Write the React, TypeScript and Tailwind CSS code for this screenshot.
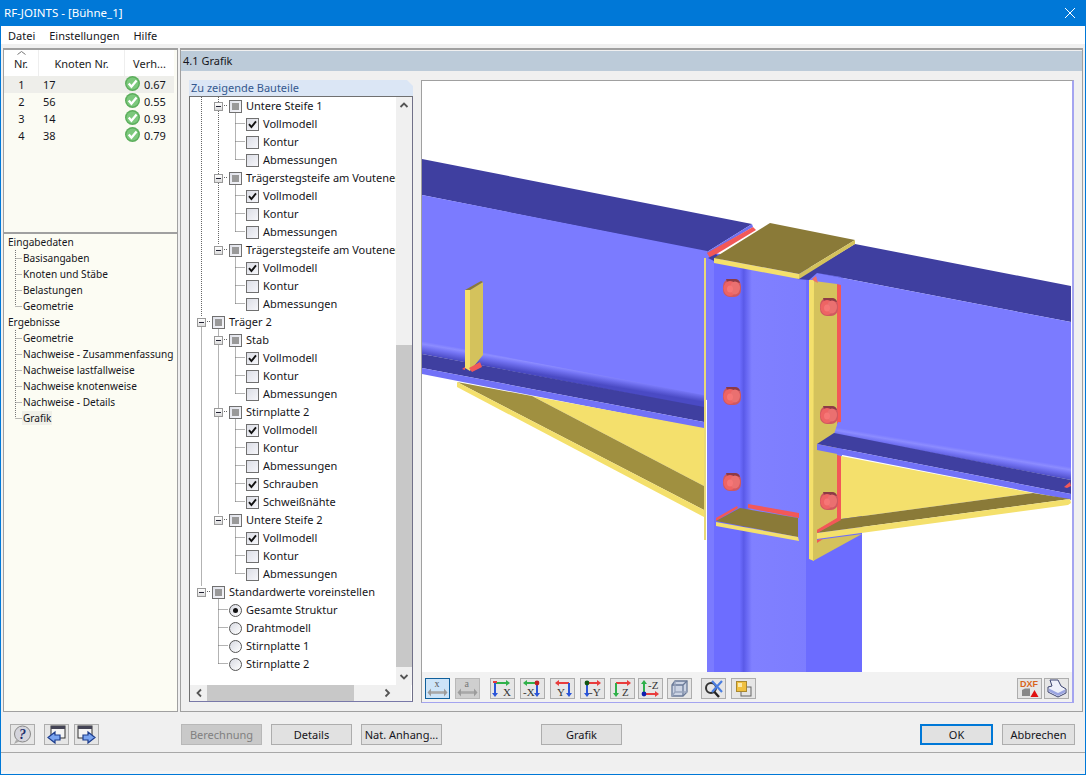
import React from "react";

const FONT = "[font-family:'Noto_Sans',sans-serif]";

function Poly({ p, f }: { p: string; f: string }) {
  return <polygon points={p} fill={f} />;
}

function Bolt({ x, y }: { x: number; y: number }) {
  return (
    <g>
      <rect x={x - 9} y={y - 9} width={18} height={18} rx={7} fill="#cf5860" />
      <path d={`M${x - 6} ${y - 9} h9 q4 0 5 4 l-4 -1 h-9 z`} fill="#8c3a46" />
      <ellipse cx={x - 2} cy={y + 0.5} rx={6.5} ry={7.5} fill="#ee6464" />
      <ellipse cx={x + 3} cy={y} rx={5} ry={6.5} fill="#ea7070" />
      <ellipse cx={x - 2} cy={y + 1} rx={3} ry={3.5} fill="#f67676" />
    </g>
  );
}

function Scene() {
  const web = "#7b7bff";
  const dark = "#3f3fa0";
  const flange = "#7272f8";
  const y1 = "#f4e06c";
  const y2 = "#d4c25c";
  const ol = "#8a7a38";
  const ol2 = "#a09040";
  const red = "#f25858";
  const stops = (
    <>
      <stop offset="0" stopColor="#7b7bff" />
      <stop offset="0.22" stopColor="#8c8cff" />
      <stop offset="0.45" stopColor="#7676f6" />
      <stop offset="1" stopColor="#4a4ac4" />
    </>
  );
  return (
    <svg viewBox="422 81 649 591" className="block h-[591px] w-[649px]" shapeRendering="geometricPrecision">
      <defs>
        <linearGradient id="col" gradientUnits="userSpaceOnUse" x1="707" y1="0" x2="809" y2="0">
          <stop offset="0" stopColor="#7b7bff" />
          <stop offset="0.07" stopColor="#7b7bff" />
          <stop offset="0.07" stopColor="#6d6dff" />
          <stop offset="0.32" stopColor="#6d6dff" />
          <stop offset="0.36" stopColor="#5a5ae8" />
          <stop offset="0.39" stopColor="#6868f4" />
          <stop offset="0.44" stopColor="#8080ff" />
          <stop offset="1" stopColor="#7d7dff" />
        </linearGradient>
        <linearGradient id="fl" gradientUnits="userSpaceOnUse" x1="422" y1="341" x2="419.8" y2="354">
          {stops}
        </linearGradient>
        <linearGradient id="fr" gradientUnits="userSpaceOnUse" x1="1071" y1="467" x2="1068.8" y2="480">
          {stops}
        </linearGradient>
      </defs>

      {/* left beam */}
      <Poly p="422,159 752,224 707,252 422,195" f={dark} />
      <Poly p="422,195 707,251 707,400 422,345" f={web} />
      <Poly p="422,341 704,395 704,408 422,354" f="url(#fl)" />
      <Poly p="422,354 704,407 704,422 422,368" f={dark} />
      <Poly p="422,368 704,422 704,429 422,374" f={flange} />

      {/* left haunch */}
      <Poly p="532,396 704,428 704,486" f={y1} />
      <Poly p="457,382 532,396 704,486 704,510" f={ol2} />
      <Poly p="457,382 704,510 704,517 457,387" f={y1} />
      <rect x="704" y="258" width="2" height="282" fill="#e8d878" />

      {/* left stiffener */}
      <Poly p="465,290 470,290 470,371 465,368" f={y1} />
      <Poly p="470,290 483,282 483,355 470,371" f={y2} />
      <Poly p="465,290 481,281 483,282 470,290" f={ol} />
      <Poly p="469,368 480,362 482,367 472,372" f={red} />
      <Poly p="462,369 465,367 465,370" f={red} />

      {/* column */}
      <Poly p="707,252 842,272 842,672 707,672" f="url(#col)" />
      <Poly p="806,533 862,533 862,672 806,672" f="#6c6cff" />
      <Poly p="820,500 862,500 862,540 820,540" f="#6c6cff" />
      <Poly p="806,270 809,270 809,540 806,540" f="#6c6cff" />

      {/* top plate region */}
      <Poly p="707,252 752,224 753,227 707,254" f="#7070f0" />
      <Poly p="707,253 753,227 756,230 710,258" f={red} />
      <Poly p="708,258 716,254 722,260 716,262" f={dark} />

      {/* right end plate */}
      <Poly p="809,280 814,280 814,561 809,559" f={y1} />
      <Poly p="814,281 837,284 837,520 817,533 817,540 862,534 813,561" f={y2} />

      {/* right beam */}
      <Poly p="855,244 1071,286 1071,322 817,273 809,280 797,279" f={dark} />
      <Poly p="817,273 1071,322 1071,472 838,428 841,277" f={web} />
      <Poly p="837,284 841,285 841,422 837,424" f={red} />
      <Poly p="812,279 816,276 818,283 814,281" f="#f07068" />
      <Poly p="1071,467 1071,480 834,434 838,422" f="url(#fr)" />
      <Poly p="834,433 1071,480 1071,494 817,444" f={dark} />
      <Poly p="817,444 1071,494 1071,500 817,450" f={flange} />
      <Poly p="1064,487 1070,482 1071,486 1067,488" f={red} />

      {/* right haunch */}
      <Poly p="837,455 841,456 841,520 817,533 817,530 837,518" f={red} />
      <Poly p="841,456 1033,493 841,519" f={y1} />
      <Poly p="841,519 1033,493 1070,499 817,533" f={ol} />
      <Poly p="817,533 1070,499 1071,503 1068,505 817,539" f={y1} />
      <Poly p="817,530 840,517 841,520 817,533" f={red} />
      <Poly p="817,540 823,539 817,543" f={red} />

      {/* lower left seat */}
      <Poly p="716,518 737,506 738,508 716,521" f={red} />
      <Poly p="748,504 799,513 799,518 748,508" f={red} />
      <Poly p="716,521 740,508 798,518 798,537" f={ol} />
      <Poly p="716,522 798,537 799,541 716,526" f={y1} />

      {/* top plate */}
      <Poly p="714,258 770,223 855,240 799,274" f={ol} />
      <Poly p="714,258 799,274 799,279 714,263" f={y1} />
      <Poly p="799,274 855,240 855,244 799,279" f={y2} />

      <Bolt x={732} y={288} />
      <Bolt x={732} y={396} />
      <Bolt x={732} y={482} />
      <Bolt x={829} y={307} />
      <Bolt x={829} y={415} />
      <Bolt x={829} y={501} />
    </svg>
  );
}

function Check({ className }: { className?: string }) {
  return (
    <svg viewBox="0 0 14 14" className={className}>
      <circle cx="7" cy="7" r="7" fill="#5cae5c" />
      <circle cx="7" cy="7" r="5.6" fill="#7cc87c" />
      <path d="M3.5 7 L6 10 L10.8 4.2" stroke="#fff" strokeWidth="2.2" fill="none" />
    </svg>
  );
}

const tableRows = [
  ["1", "17", "0.67"],
  ["2", "56", "0.55"],
  ["3", "14", "0.93"],
  ["4", "38", "0.79"],
];

function ResultTable() {
  return (
    <div className="h-[184px] w-[175px] shrink-0 border-x border-t-2 border-[#a0a0a0] bg-[#fbfbf3]">
      <div className="relative flex h-[26px] w-[170px] items-center bg-white text-[#222]">
        <svg viewBox="0 0 9 4" className="absolute left-[13px] top-[1px] h-[4px] w-[9px]">
          <path d="M0.5 3.5 L4.5 0.5 L8.5 3.5" stroke="#777" fill="none" />
        </svg>
        <span className="h-full w-[35px] border-r border-[#eee] text-center leading-[27px]">Nr.</span>
        <span className="h-full w-[86px] border-r border-[#eee] text-center leading-[27px]">Knoten Nr.</span>
        <span className="h-full flex-1 text-center leading-[27px]">Verh...</span>
      </div>
      {tableRows.map((r, i) => (
        <div key={r[0]} className={`flex h-[17px] w-[170px] items-center ${i === 0 ? "bg-[#eeeeea]" : ""}`}>
          <span className="w-[35px] text-center">{r[0]}</span>
          <span className="w-[86px] pl-[4px]">{r[1]}</span>
          <span className="flex flex-1 items-center gap-[4px]">
            <Check className="-mt-[2px] h-[15px] w-[15px] shrink-0" />
            {r[2]}
          </span>
        </div>
      ))}
    </div>
  );
}

function NavTree() {
  const rows: [string, boolean][] = [
    ["Eingabedaten", false],
    ["Basisangaben", true],
    ["Knoten und Stäbe", true],
    ["Belastungen", true],
    ["Geometrie", true],
    ["Ergebnisse", false],
    ["Geometrie", true],
    ["Nachweise - Zusammenfassung", true],
    ["Nachweise lastfallweise", true],
    ["Nachweise knotenweise", true],
    ["Nachweise - Details", true],
    ["Grafik", true],
  ];
  return (
    <div className="relative w-[175px] flex-1 overflow-hidden border border-t-2 border-[#a0a0a0] bg-[#fcfcf3] text-[10.1px]">
      <svg className="absolute left-0 top-0 h-[220px] w-[40px]" stroke="#777" strokeDasharray="1 1" fill="none">
        <path d="M11.5 16 V72 M11.5 24.5 H18 M11.5 40.5 H18 M11.5 56.5 H18 M11.5 72.5 H18" />
        <path d="M11.5 96 V184 M11.5 104.5 H18 M11.5 120.5 H18 M11.5 136.5 H18 M11.5 152.5 H18 M11.5 168.5 H18 M11.5 184.5 H18" />
      </svg>
      <div className="relative">
        {rows.map(([t, c], i) => (
          <div key={i} className={`flex h-[16px] items-center whitespace-nowrap ${c ? "pl-[19px]" : "pl-[4px]"}`}>
            <span className={t === "Grafik" ? "-ml-[1px] bg-[#f0f0e8] px-[1px] py-[2px]" : ""}>{t}</span>
          </div>
        ))}
      </div>
    </div>
  );
}

function Expander() {
  return (
    <span className="relative z-10 flex h-[9px] w-[9px] shrink-0 items-center justify-center border border-[#9a9a9a] bg-gradient-to-b from-white to-[#dcdcdc]">
      <span className="block h-px w-[5px] bg-[#223]" />
    </span>
  );
}
function TriBox() {
  return (
    <span className="relative z-10 flex h-[13px] w-[13px] shrink-0 items-center justify-center border border-[#707070] bg-gradient-to-br from-[#e0e2ea] to-[#f6f6fa]">
      <span className="block h-[7px] w-[7px] bg-[#999]" />
    </span>
  );
}
function CheckBox({ on }: { on: boolean }) {
  return (
    <span className="relative z-10 flex h-[13px] w-[13px] shrink-0 items-center justify-center border border-[#707070] bg-gradient-to-br from-[#dcdee6] to-[#f6f6fa]">
      {on && (
        <svg viewBox="0 0 11 11" className="h-[11px] w-[11px]">
          <path d="M2 5.2 L4.4 8 L9 2.4" stroke="#111" strokeWidth="1.9" fill="none" />
        </svg>
      )}
    </span>
  );
}
function Radio({ on }: { on: boolean }) {
  return (
    <span className="relative z-10 flex h-[13px] w-[13px] shrink-0 items-center justify-center rounded-full border border-[#555] bg-gradient-to-br from-[#d8dae2] to-white">
      {on && <span className="block h-[5px] w-[5px] rounded-full bg-[#111]" />}
    </span>
  );
}

type R = { k: "g1" | "g2" | "r"; t: string } | { k: "c"; t: string; on: boolean };
const ch = (t: string, on = false): R => ({ k: "c", t, on });
const g2 = (t: string): R => ({ k: "g2", t });
const treeRows: R[] = [
  g2("Untere Steife 1"), ch("Vollmodell", true), ch("Kontur"), ch("Abmessungen"),
  g2("Trägerstegsteife am Voutenende"), ch("Vollmodell", true), ch("Kontur"), ch("Abmessungen"),
  g2("Trägerstegsteife am Voutenende"), ch("Vollmodell", true), ch("Kontur"), ch("Abmessungen"),
  { k: "g1", t: "Träger 2" },
  g2("Stab"), ch("Vollmodell", true), ch("Kontur"), ch("Abmessungen"),
  g2("Stirnplatte 2"), ch("Vollmodell", true), ch("Kontur"), ch("Abmessungen"), ch("Schrauben", true), ch("Schweißnähte", true),
  g2("Untere Steife 2"), ch("Vollmodell", true), ch("Kontur"), ch("Abmessungen"),
  { k: "g1", t: "Standardwerte voreinstellen" },
  { k: "r", t: "Gesamte Struktur" }, { k: "r", t: "Drahtmodell" }, { k: "r", t: "Stirnplatte 1" }, { k: "r", t: "Stirnplatte 2" },
];

function treeLines() {
  const d: string[] = [];
  const cy = (i: number) => i * 18 + 8.5;
  treeRows.forEach((r, i) => {
    if (r.k === "c") d.push(`M45.5 ${cy(i)} H55`);
    if (r.k === "r") d.push(`M28.5 ${cy(i)} H38`);
    if (r.k === "g2") d.push(`M32 ${cy(i)} H38`);
    if (r.k === "g1") d.push(`M15 ${cy(i)} H21`);
  });
  [[0, 3], [4, 7], [8, 11], [13, 16], [17, 22], [23, 26]].forEach(([a, b]) => {
    d.push(`M45.5 ${cy(a) + 7} V${cy(b)}`);
  });
  d.push(`M28.5 ${cy(27) + 5} V${cy(31)}`);
  d.push(`M28.5 0 V${cy(8) - 5}`, `M28.5 ${cy(12) + 5} V${cy(23) - 5}`);
  d.push(`M11.5 0 V${cy(12) - 5}`, `M11.5 ${cy(12) + 5} V${cy(27) - 5}`);
  return d.join(" ");
}

function TreeRow({ r }: { r: R }) {
  const base = "flex h-[18px] items-center whitespace-nowrap";
  const label = "ml-[4px] -translate-y-px";
  if (r.k === "g1" || r.k === "g2")
    return (
      <div className={`${base} ${r.k === "g1" ? "pl-[7px]" : "pl-[24px]"}`}>
        <Expander />
        <span className="ml-[6px]"><TriBox /></span>
        <span className={label}>{r.t}</span>
      </div>
    );
  if (r.k === "c")
    return (
      <div className={`${base} pl-[56px]`}>
        <CheckBox on={r.on} />
        <span className={label}>{r.t}</span>
      </div>
    );
  return (
    <div className={`${base} pl-[39px]`}>
      <Radio on={r.t === "Gesamte Struktur"} />
      <span className={label}>{r.t}</span>
    </div>
  );
}

function ScrollArrow({ d }: { d: string }) {
  return (
    <svg viewBox="0 0 10 10" className="h-[10px] w-[10px]">
      <path d={d} stroke="#555" strokeWidth="1.8" fill="none" />
    </svg>
  );
}

function TreePanel() {
  return (
    <div className="flex w-[224px] shrink-0 flex-col">
      <div className="h-[16px] shrink-0 bg-[#dbe6f5] pl-[2px] leading-[15px] text-[#35598f] [clip-path:polygon(0_0,calc(100%-6px)_0,100%_6px,100%_100%,0_100%)]">
        Zu zeigende Bauteile
      </div>
      <div className="mb-[1px] flex flex-1 flex-col border border-[#707070] border-b-[#7878a8] border-r-[#707088] bg-white">
        <div className="flex h-[588px] shrink-0">
          <div className="relative w-[206px] overflow-hidden">
            <svg className="absolute left-0 top-0 h-[588px] w-[70px]" fill="none" stroke="#666" strokeDasharray="1 1">
              <path d={treeLines()} />
            </svg>
            <div className="relative">
              {treeRows.map((r, i) => (
                <TreeRow key={i} r={r} />
              ))}
            </div>
          </div>
          <div className="flex w-[16px] flex-col bg-[#f0f0f0]">
            <div className="flex h-[15px] items-center justify-center"><ScrollArrow d="M1.5 7 L5 3.5 L8.5 7" /></div>
            <div className="h-[233px]" />
            <div className="h-[322px] bg-[#c8c8c8]" />
            <div className="flex-1" />
            <div className="flex h-[16px] items-center justify-center"><ScrollArrow d="M1.5 3 L5 6.5 L8.5 3" /></div>
          </div>
        </div>
        <div className="mr-[1px] flex h-[16px] items-center bg-[#f0f0f0]">
          <div className="flex w-[17px] items-center justify-center"><ScrollArrow d="M7 1.5 L3.5 5 L7 8.5" /></div>
          <div className="h-full w-[147px] bg-[#c8c8c8]" />
          <div className="flex-1" />
          <div className="flex w-[17px] items-center justify-center"><ScrollArrow d="M3.5 1.5 L7 5 L3.5 8.5" /></div>
          <div className="w-[16px]" />
        </div>
      </div>
    </div>
  );
}

function TB({ children, active, disabled, className = "" }: { children?: React.ReactNode; active?: boolean; disabled?: boolean; className?: string }) {
  return (
    <div
      className={`flex h-[21px] w-[25px] shrink-0 items-center justify-center border ${
        active ? "border-[#10609c] bg-[#cde4f8]" : disabled ? "border-[#b8b8b8] bg-[#cfcfcf]" : "border-[#adadad] bg-[#e6e6e6]"
      } ${className}`}
    >
      {children}
    </div>
  );
}

const G = "#2fb04a", B = "#2a55d8", Rd = "#e83c3c";
function Arrow({ x1, y1, x2, y2, c }: { x1: number; y1: number; x2: number; y2: number; c: string }) {
  const dx = Math.sign(x2 - x1), dy = Math.sign(y2 - y1);
  const head = dx
    ? `${x2},${y2} ${x2 - dx * 4},${y2 - 3} ${x2 - dx * 4},${y2 + 3}`
    : `${x2},${y2} ${x2 - 3},${y2 - dy * 4} ${x2 + 3},${y2 - dy * 4}`;
  return (
    <g>
      <line x1={x1} y1={y1} x2={x2 - dx * 3} y2={y2 - dy * 3} stroke={c} strokeWidth={2} />
      <polygon points={head} fill={c} />
    </g>
  );
}

function Axis({ children, label, lx, ly, dot, dc }: { children: React.ReactNode; label: string; lx: number; ly: number; dot?: [number, number]; dc?: string }) {
  return (
    <svg viewBox="0 0 23 19" className="h-[19px] w-[23px]">
      {children}
      {dot && <circle cx={dot[0]} cy={dot[1]} r={2.4} fill={dc} />}
      <text x={lx} y={ly} fontFamily="'Liberation Serif',serif" fontSize="11" fill="#333">{label}</text>
    </svg>
  );
}

function DimIcon({ l, c }: { l: string; c: string }) {
  return (
    <svg viewBox="0 0 23 19" className="h-[19px] w-[23px]">
      <text x="8.5" y="8" fontFamily="'Liberation Serif',serif" fontSize="10" fill={c}>{l}</text>
      <path d="M3 13.5 H20" stroke="#a8a8a8" strokeWidth="2.6" />
      <path d="M1.5 13.5 L5 9.5 V17.5 Z M21.5 13.5 L18 9.5 V17.5 Z" fill="#9c9c9c" />
    </svg>
  );
}

function Toolbar() {
  return (
    <div className="flex h-[30px] shrink-0 items-center bg-[#f2f2f2] px-[3px] pt-[2px]">
      <TB active><DimIcon l="x" c="#555" /></TB>
      <TB disabled className="ml-[5px]"><DimIcon l="a" c="#777" /></TB>
      <TB className="ml-[10px]">
        <Axis label="X" lx={12} ly={17}>
          <Arrow x1={4} y1={4} x2={19} y2={4} c={G} />
          <Arrow x1={4} y1={4} x2={4} y2={18} c={B} />
          <line x1={2} y1={3} x2={6} y2={3} stroke={Rd} strokeWidth={2} />
        </Axis>
      </TB>
      <TB className="ml-[5px]">
        <Axis label="-X" lx={2} ly={17} dot={[16, 4]} dc="#c02020">
          <Arrow x1={16} y1={4} x2={2} y2={4} c={G} />
          <Arrow x1={16} y1={4} x2={16} y2={18} c={B} />
        </Axis>
      </TB>
      <TB className="ml-[5px]">
        <Axis label="Y" lx={6} ly={17}>
          <Arrow x1={18} y1={4} x2={4} y2={4} c={Rd} />
          <Arrow x1={18} y1={4} x2={18} y2={18} c={B} />
        </Axis>
      </TB>
      <TB className="ml-[5px]">
        <Axis label="-Y" lx={8} ly={17} dot={[6, 4]} dc="#115511">
          <Arrow x1={6} y1={4} x2={20} y2={4} c={Rd} />
          <Arrow x1={6} y1={4} x2={6} y2={18} c={B} />
        </Axis>
      </TB>
      <TB className="ml-[5px]">
        <Axis label="Z" lx={11} ly={17}>
          <Arrow x1={5} y1={4} x2={20} y2={4} c={Rd} />
          <Arrow x1={5} y1={4} x2={5} y2={18} c={G} />
        </Axis>
      </TB>
      <TB className="ml-[3px]">
        <Axis label="-Z" lx={9} ly={10} dot={[5, 15]} dc="#1020b0">
          <Arrow x1={5} y1={15} x2={20} y2={15} c={Rd} />
          <Arrow x1={5} y1={15} x2={5} y2={1} c={G} />
        </Axis>
      </TB>
      <TB className="ml-[4px]">
        <svg viewBox="0 0 19 19" className="h-[19px] w-[19px]" fill="none" stroke="#6a7a98" strokeWidth="1.3">
          <path d="M5 2 H17 V13 L13 17 H2 V6 Z" fill="#ccd4e4" />
          <path d="M2 6 H13 V17 M13 6 L17 2" />
          <path d="M5 2 V13 H17 M5 13 L2 17" stroke="#98a4bc" />
        </svg>
      </TB>
      <TB className="ml-[9px]">
        <svg viewBox="0 0 21 19" className="h-[19px] w-[21px]" fill="none">
          <circle cx="8" cy="9" r="5" stroke="#333" strokeWidth="2" />
          <path d="M11.5 13 L16 18" stroke="#222" strokeWidth="2.4" />
          <path d="M9 2 L19 13 M19 2 L9 13" stroke="#4a7ee0" strokeWidth="2.2" />
        </svg>
      </TB>
      <TB className="ml-[5px]">
        <svg viewBox="0 0 19 19" className="h-[19px] w-[19px]">
          <rect x="7" y="8" width="10" height="9" fill="#e4e4e4" stroke="#666" />
          <rect x="2.5" y="2.5" width="10" height="10" fill="#f0c040" stroke="#a88830" />
          <rect x="4" y="4" width="4" height="4" fill="#fbe9a8" />
        </svg>
      </TB>
      <div className="flex-1" />
      <TB className="mr-[2px]">
        <svg viewBox="0 0 23 19" className="h-[19px] w-[23px]">
          <text x="2" y="8" fontFamily="'Liberation Sans',sans-serif" fontWeight="700" fontSize="9" fill="#d8641c">DXF</text>
          <path d="M4 11 L7 9.5 H12 V17 H4 Z" fill="#888" />
          <path d="M16.5 11 L20.5 18 H12.5 Z" fill="#e01010" />
        </svg>
      </TB>
      <TB>
        <svg viewBox="0 0 23 19" className="h-[19px] w-[23px]">
          <path d="M5 1 H13 L16 7 L21 10 V14 L13 18 L3 13 V8 L7 7 Z" fill="#eef0fa" stroke="#3c4470" strokeWidth="1" />
          <path d="M4 9.5 L13 14 L20 10.5 V13.5 L13 17 L4 12.5 Z" fill="#9aa4e0" />
        </svg>
      </TB>
    </div>
  );
}

function Btn({ children, className = "" }: { children: React.ReactNode; className?: string }) {
  return (
    <div className={`flex h-[21px] shrink-0 items-center justify-center whitespace-nowrap ${className}`}>
      {children}
    </div>
  );
}

function IconBtn({ children, className = "" }: { children: React.ReactNode; className?: string }) {
  return (
    <div className={`flex h-[21px] w-[25px] shrink-0 items-center justify-center border border-[#adadad] bg-[#e6e6e6] ${className}`}>
      {children}
    </div>
  );
}

function NavIcon({ right }: { right?: boolean }) {
  const a = right
    ? "M8 10 H13 V7 L20 12.5 L13 18 V15 H8 Z"
    : "M15 10 H10 V7 L3 12.5 L10 18 V15 H15 Z";
  return (
    <svg viewBox="0 0 23 19" className="h-[19px] w-[23px]">
      <rect x={right ? 3 : 6} y="1" width="14" height="12" fill="#f4f4f4" stroke="#333" />
      <rect x={right ? 3 : 6} y="1" width="14" height="3" fill="#445" />
      <path d={a} fill="#7aa4f0" stroke="#1c3c8c" strokeWidth="1.2" />
    </svg>
  );
}

export default function App() {
  const plain = "border border-[#adadad] bg-[#e1e1e1]";
  return (
    <div className={`${FONT} flex h-[775px] w-[1086px] flex-col overflow-hidden border-x border-b border-[#0078d7] bg-[#f0f0f0] text-[11px] leading-none text-[#151520]`}>
      <div className="flex h-[26px] shrink-0 items-center bg-[#0078d7] pl-[3px] pr-[9px] text-[11.5px] text-white">
        <span>RF-JOINTS - [Bühne_1]</span>
        <svg viewBox="0 0 12 12" className="ml-auto h-[12px] w-[12px]">
          <path d="M1 1 L11 11 M11 1 L1 11" stroke="#fff" strokeWidth="1" />
        </svg>
      </div>
      <div className="flex h-[18px] shrink-0 items-center bg-white pl-[7px]">
        <span>Datei</span>
        <span className="ml-[14px]">Einstellungen</span>
        <span className="ml-[14px]">Hilfe</span>
      </div>

      <div className="flex h-[669px] shrink-0 gap-[2px] px-[2px] pb-[1px] pt-[4px]">
        <div className="flex w-[175px] shrink-0 flex-col">
          <ResultTable />
          <NavTree />
        </div>
        <div className="flex min-w-0 flex-1 flex-col border border-t-2 border-[#a0a0a0] px-[8px] pb-[8px] pt-[1px]">
          <div className="-mx-[8px] h-[20px] shrink-0 bg-[#bccbd9] pl-[2px] leading-[20px]">4.1 Grafik</div>
          <div className="mt-[9px] flex min-h-0 flex-1 gap-[8px]">
            <TreePanel />
            <div className="flex w-[653px] shrink-0 flex-col border-b border-l border-r-2 border-t border-b-[#a4a4f0] border-l-[#a0a0a0] border-r-[#a4a4f0] border-t-[#a0a0a0]">
              <div className="h-[591px] shrink-0 bg-white pr-[2px]">
                <Scene />
              </div>
              <Toolbar />
            </div>
          </div>
        </div>
      </div>

      <div className="flex h-[39px] shrink-0 pl-[9px] pt-[11px]">
        <IconBtn>
          <svg viewBox="0 0 23 19" className="h-[19px] w-[23px]">
            <circle cx="11.5" cy="9" r="8" fill="#d4d4dc" stroke="#888" />
            <path d="M5 15 L3 19 L9 16 Z" fill="#aaa" />
            <text x="8" y="14" fontFamily="'Liberation Serif',serif" fontWeight="700" fontStyle="italic" fontSize="14" fill="#1c2c6c">?</text>
          </svg>
        </IconBtn>
        <IconBtn className="ml-[9px]"><NavIcon /></IconBtn>
        <IconBtn className="ml-[5px]"><NavIcon right /></IconBtn>
        <Btn className="ml-[82px] w-[81px] border border-[#b8b8b8] bg-[#c9c9c9] text-[#808080]">Berechnung</Btn>
        <Btn className={`ml-[9px] w-[81px] ${plain}`}>Details</Btn>
        <Btn className={`ml-[9px] w-[81px] ${plain}`}>Nat. Anhang...</Btn>
        <Btn className={`ml-[99px] w-[81px] ${plain}`}>Grafik</Btn>
        <Btn className="ml-[298px] w-[73px] border-2 border-[#0078d7] bg-[#e1e1e1]">OK</Btn>
        <Btn className={`ml-[9px] w-[73px] ${plain}`}>Abbrechen</Btn>
      </div>
      <div className="h-[22px] shrink-0 border-b-[3px] border-t border-b-[#f4f4f4] border-t-[#a8a8a8]" />
    </div>
  );
}
